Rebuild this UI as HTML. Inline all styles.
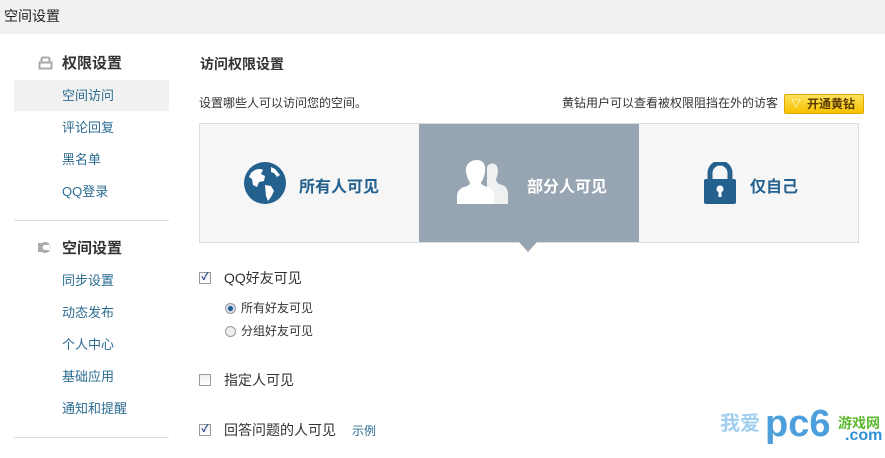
<!DOCTYPE html><html><head><meta charset="utf-8"><style>
*{margin:0;padding:0;box-sizing:border-box}
body{width:885px;height:458px;overflow:hidden;background:#fff;font-family:"Liberation Sans","Noto Sans CJK SC",sans-serif;color:#333;position:relative}
.a{position:absolute;white-space:nowrap}
.top{left:0;top:0;width:885px;height:34px;background:#f1f1f1;font-size:14px;line-height:32px;padding-left:4px;color:#222}
.h{font-size:15px;font-weight:bold;color:#333}
.it{font-size:13px;color:#2b6b92;left:62px}
.hl{left:14px;top:80px;width:155px;height:31px;background:#f1f1f1}
.div{left:14px;width:155px;height:1px;background:#ddd}
.tile{top:124px;height:118px;width:220px}
.tt{font-size:16px;font-weight:bold;color:#24618f}
.cb{width:12px;height:12px;border:1px solid #9a9a9a;background:linear-gradient(#eee,#fff);font-size:10px;line-height:10px;text-align:center;color:#24418a;font-weight:bold}
.rd{width:11px;height:11px;border-radius:50%;border:1px solid #999;background:#eee}
</style></head><body>
<div class="a top">空间设置</div>
<div class="a hl"></div>
<svg class="a" style="left:38px;top:56px" width="15" height="14"><rect x="1.5" y="6.5" width="12" height="6" fill="none" stroke="#aaa" stroke-width="2"/><path d="M3.5 6.5V3a1.5 1.5 0 0 1 1.5-1.5h5A1.5 1.5 0 0 1 11.5 3v3.5" fill="none" stroke="#aaa" stroke-width="2"/></svg>
<div class="a h" style="left:62px;top:52px">权限设置</div>
<div class="a it" style="top:85px">空间访问</div>
<div class="a it" style="top:117px">评论回复</div>
<div class="a it" style="top:149px">黑名单</div>
<div class="a it" style="top:181px">QQ登录</div>
<div class="a div" style="top:220px"></div>
<svg class="a" style="left:36px;top:240px" width="18" height="15"><path d="M2 3h5v2H5v5h2v2H2zM9 2a5.5 5.5 0 1 1 0 11 5.5 5.5 0 0 1 0-11zm0 3a2.5 2.5 0 1 0 0 5h5V5z" fill="#aaa"/></svg>
<div class="a h" style="left:62px;top:237px">空间设置</div>
<div class="a it" style="top:270px">同步设置</div>
<div class="a it" style="top:302px">动态发布</div>
<div class="a it" style="top:334px">个人中心</div>
<div class="a it" style="top:366px">基础应用</div>
<div class="a it" style="top:398px">通知和提醒</div>
<div class="a div" style="top:437px"></div>

<div class="a" style="left:200px;top:54px;font-size:14px;font-weight:bold;color:#333">访问权限设置</div>
<div class="a" style="left:199px;top:94px;font-size:12px;color:#333">设置哪些人可以访问您的空间。</div>
<div class="a" style="left:562px;top:94px;font-size:12px;color:#333">黄钻用户可以查看被权限阻挡在外的访客</div>
<div class="a" style="left:784px;top:94px;width:80px;height:20px;background:linear-gradient(#ffe15a,#f6c200);border:1px solid #e0a800;border-radius:2px;font-size:12px;font-weight:bold;color:#5a3a00;line-height:18px;padding-left:22px">开通黄钻<span class="a" style="left:6px;top:1px;color:#fff;font-size:10px">▽</span></div>

<div class="a" style="left:199px;top:123px;width:660px;height:120px;border:1px solid #ddd;background:#f6f6f6"></div>
<div class="a tile" style="left:419px;background:#97a4b1"></div>
<div class="a" style="left:519px;top:242px;width:0;height:0;border-left:9px solid transparent;border-right:9px solid transparent;border-top:10px solid #97a4b1"></div>
<svg class="a" style="left:243px;top:161px" width="44" height="44"><circle cx="22" cy="22" r="21" fill="#24618f"/><path d="M8 12c4-4 9-5 12-3l-2 4 4 2-1 5-5 1-2 5-4-2-1-6-3-2zM22 24l6 1 3 5-3 6-3 4-2-5zM28 6l4 2 5 6-3 2-3-4-3-1z" fill="#fff"/></svg>
<div class="a tt" style="left:299px;top:173px">所有人可见</div>
<svg class="a" style="left:457px;top:160px" width="58" height="44"><path d="M30 8c0-4 6-6 9-3 3 3 2 10 0 14 0 3 2 5 6 6s6 5 6 10v9H30z" fill="#eef0f2"/><path d="M20 0c7 0 9 6 8 12-1 5-2 8-4 10 0 3 3 4 7 5s6 5 6 9v8H0v-8c0-4 3-8 7-9s6-2 6-5c-2-2-3-5-4-10C8 6 12 0 20 0z" fill="#fff"/></svg>
<div class="a tt" style="left:527px;top:173px;color:#fff">部分人可见</div>
<svg class="a" style="left:703px;top:162px" width="34" height="42"><path d="M7 18v-7a10 10 0 0 1 20 0v7" fill="none" stroke="#24618f" stroke-width="5"/><rect x="1" y="17" width="32" height="25" rx="2" fill="#24618f"/><circle cx="17" cy="27" r="3.5" fill="#fff"/><rect x="15.5" y="28" width="3" height="7" fill="#fff"/></svg>
<div class="a tt" style="left:750px;top:173px">仅自己</div>

<div class="a cb" style="left:199px;top:272px">✓</div>
<div class="a" style="left:224px;top:268px;font-size:14px">QQ好友可见</div>
<div class="a rd" style="left:225px;top:303px;background:radial-gradient(#1f5f92 35%,#dde 45%)"></div>
<div class="a" style="left:241px;top:299px;font-size:12px">所有好友可见</div>
<div class="a rd" style="left:225px;top:326px"></div>
<div class="a" style="left:241px;top:322px;font-size:12px">分组好友可见</div>
<div class="a cb" style="left:199px;top:374px"></div>
<div class="a" style="left:224px;top:370px;font-size:14px">指定人可见</div>
<div class="a cb" style="left:199px;top:424px">✓</div>
<div class="a" style="left:224px;top:420px;font-size:14px">回答问题的人可见</div>
<div class="a" style="left:352px;top:422px;font-size:12px;color:#2b6b92">示例</div>
<div class="a" style="left:720px;top:407px;font-size:20px;font-weight:bold;color:#8cc4ec;opacity:.8">我爱</div>
<div class="a" style="left:765px;top:403px;font-size:38px;font-weight:bold;color:#2e8fd6;opacity:.85">pc6</div>
<div class="a" style="left:838px;top:413px;font-size:14px;font-weight:bold;color:#5cb82e">游戏网</div>
<div class="a" style="left:845px;top:427px;font-size:16px;font-weight:bold;color:#2e8fd6">.com</div>
</body></html>
